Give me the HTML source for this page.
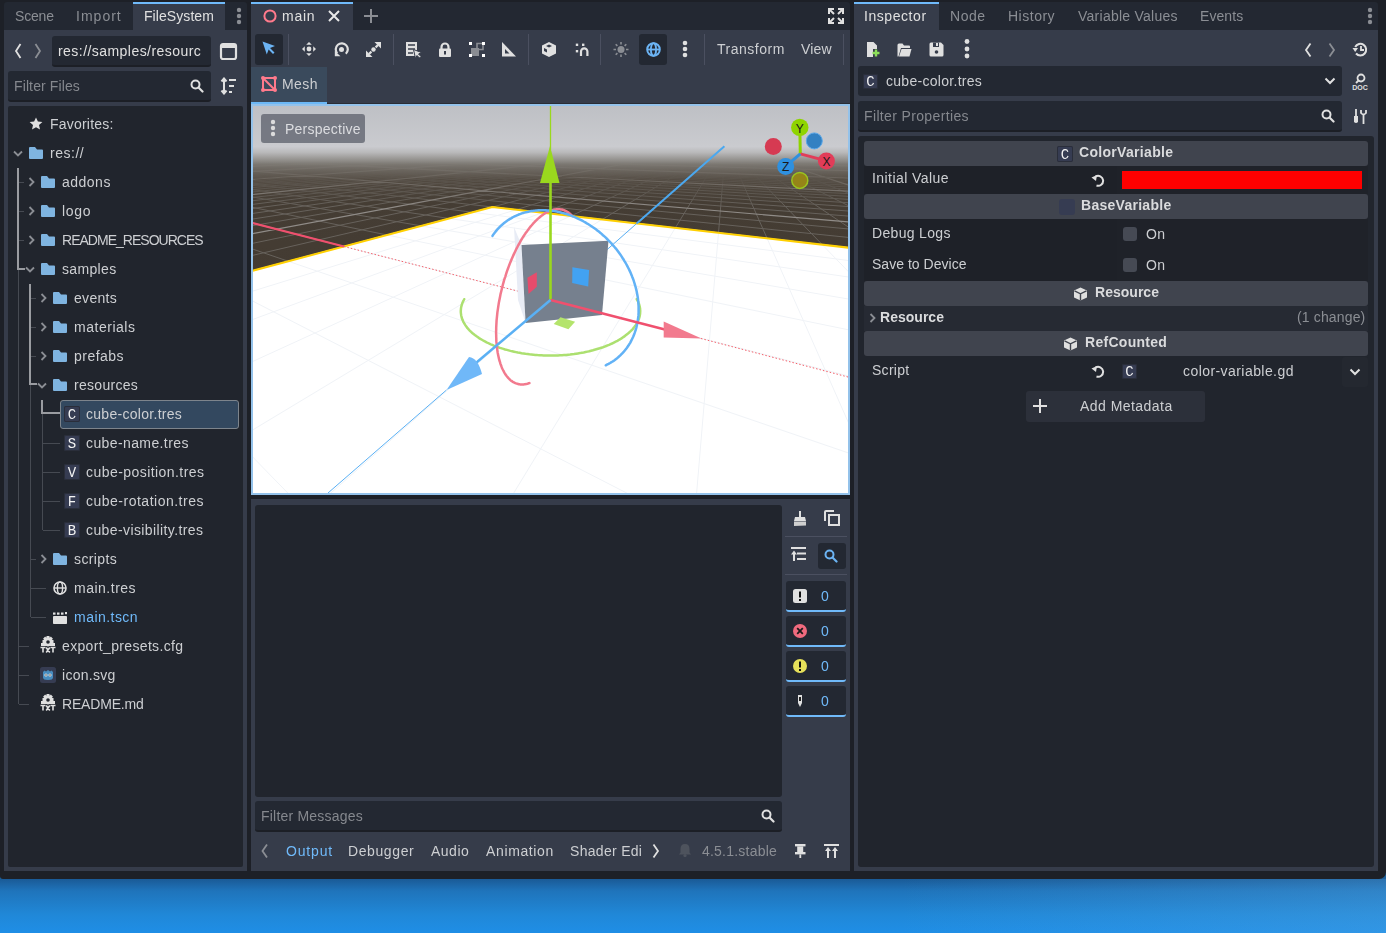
<!DOCTYPE html><html><head><meta charset="utf-8"><style>
*{margin:0;padding:0;box-sizing:border-box}
html,body{width:1386px;height:933px;overflow:hidden}
body{position:relative;font-family:"Liberation Sans",sans-serif;font-size:14px;color:#cdcfd2;
background:linear-gradient(180deg,#1b5a93 0px,#1b5a93 870px,#2d8bd6 933px)}
.a{position:absolute}
.t{position:absolute;line-height:16px;white-space:nowrap;will-change:transform}
</style></head><body>
<div class=a style="left:0;top:879px;width:1386px;height:54px;background:linear-gradient(180deg,#1a5a96 0px,#1f74bb 12px,#2088d8 36px,#1f8ee6 54px)"></div>
<div class=a style="left:900px;top:879px;width:486px;height:54px;background:linear-gradient(90deg,rgba(60,160,230,0),rgba(90,170,230,.30))"></div>
<div class=a style="left:0;top:0;width:1386px;height:879px;background:#1d2027;border-radius:0 0 7px 3px"></div>
<div class=a style="left:4px;top:2px;width:243px;height:28px;background:#232832;border-radius:3px 3px 0 0"></div>
<div class=a style="left:133px;top:2px;width:92px;height:28px;background:#363c4a;"></div>
<div class=a style="left:133px;top:2px;width:92px;height:2px;background:#70bafa;"></div>
<div class=t style="left:15px;top:8px;color:#8b8e94;font-size:14px;font-weight:normal;letter-spacing:-0.169px">Scene</div>
<div class=t style="left:76px;top:8px;color:#8b8e94;font-size:14px;font-weight:normal;letter-spacing:1.013px">Import</div>
<div class=t style="left:144px;top:8px;color:#e0e0e0;font-size:14px;font-weight:normal;letter-spacing:0.073px">FileSystem</div>
<svg class=a style="left:235px;top:6px;" width="8" height="20" viewBox="0 0 8 20"><circle cx="4" cy="4" r="2.2" fill="#8b8e94"/><circle cx="4" cy="10" r="2.2" fill="#8b8e94"/><circle cx="4" cy="16" r="2.2" fill="#8b8e94"/></svg>
<div class=a style="left:4px;top:30px;width:243px;height:841px;background:#363c4a;"></div>
<svg class=a style="left:13px;top:42px;" width="10" height="18" viewBox="0 0 10 18"><path d="M7.5 2 L3 9 L7.5 16" stroke="#e0e0e0" stroke-width="1.8" fill="none"/></svg>
<svg class=a style="left:33px;top:42px;" width="10" height="18" viewBox="0 0 10 18"><path d="M2.5 2 L7 9 L2.5 16" stroke="#8b8e94" stroke-width="1.8" fill="none"/></svg>
<div class=a style="left:52px;top:36px;width:159px;height:31px;background:#232832;border-radius:3px;border-bottom:2px solid #1c1f26"></div>
<div class=a style="left:58px;top:36px;width:143px;height:31px;overflow:hidden"><div class=t style="left:0px;top:7px;color:#e0e0e0;letter-spacing:0.45px">res://samples/resources</div></div>
<svg class=a style="left:219px;top:42px;" width="19" height="19" viewBox="0 0 19 19"><rect x="2" y="2" width="15" height="15" rx="2" stroke="#e0e0e0" stroke-width="2.2" fill="none"/><rect x="2" y="2" width="15" height="4" fill="#e0e0e0"/></svg>
<div class=a style="left:8px;top:71px;width:203px;height:31px;background:#232832;border-radius:3px;border-bottom:2px solid #1c1f26"></div>
<div class=t style="left:14px;top:78px;color:#85888e;font-size:14px;font-weight:normal;letter-spacing:0.117px">Filter Files</div>
<svg class=a style="left:190px;top:79px;" width="14" height="14" viewBox="0 0 14 14"><circle cx="5.5" cy="5.5" r="4" stroke="#e0e0e0" stroke-width="2" fill="none"/><path d="M8.5 8.5 L12.5 12.5" stroke="#e0e0e0" stroke-width="2.2" stroke-linecap="round"/></svg>
<svg class=a style="left:220px;top:77px;" width="18" height="18" viewBox="0 0 18 18"><path d="M4 2 L4 16 M1.5 4.5 L4 1.5 L6.5 4.5 M1.5 13.5 L4 16.5 L6.5 13.5" stroke="#e0e0e0" stroke-width="2" fill="none"/><path d="M9 3h7 M9 9h5 M9 15h3" stroke="#e0e0e0" stroke-width="2"/></svg>
<div class=a style="left:8px;top:106px;width:235px;height:761px;background:#21252d;border-radius:2px"></div>
<div class=a style="left:17px;top:168px;width:2px;height:102px;background:#9a9ca1;"></div>
<div class=a style="left:17px;top:268px;width:8px;height:2px;background:#9a9ca1;"></div>
<div class=a style="left:18px;top:270px;width:1px;height:434px;background:#464a52;"></div>
<div class=a style="left:19px;top:182px;width:5px;height:1px;background:#464a52;"></div>
<div class=a style="left:19px;top:211px;width:5px;height:1px;background:#464a52;"></div>
<div class=a style="left:19px;top:240px;width:5px;height:1px;background:#464a52;"></div>
<div class=a style="left:19px;top:646px;width:10px;height:1px;background:#464a52;"></div>
<div class=a style="left:19px;top:675px;width:10px;height:1px;background:#464a52;"></div>
<div class=a style="left:19px;top:704px;width:10px;height:1px;background:#464a52;"></div>
<div class=a style="left:29px;top:284px;width:2px;height:101px;background:#9a9ca1;"></div>
<div class=a style="left:29px;top:383px;width:8px;height:2px;background:#9a9ca1;"></div>
<div class=a style="left:30px;top:385px;width:1px;height:232px;background:#464a52;"></div>
<div class=a style="left:31px;top:298px;width:5px;height:1px;background:#464a52;"></div>
<div class=a style="left:31px;top:327px;width:5px;height:1px;background:#464a52;"></div>
<div class=a style="left:31px;top:356px;width:5px;height:1px;background:#464a52;"></div>
<div class=a style="left:31px;top:559px;width:5px;height:1px;background:#464a52;"></div>
<div class=a style="left:31px;top:588px;width:15px;height:1px;background:#464a52;"></div>
<div class=a style="left:31px;top:617px;width:15px;height:1px;background:#464a52;"></div>
<div class=a style="left:41px;top:400px;width:2px;height:14px;background:#9a9ca1;"></div>
<div class=a style="left:41px;top:412px;width:19px;height:2px;background:#9a9ca1;"></div>
<div class=a style="left:42px;top:414px;width:1px;height:116px;background:#464a52;"></div>
<div class=a style="left:43px;top:443px;width:17px;height:1px;background:#464a52;"></div>
<div class=a style="left:43px;top:472px;width:17px;height:1px;background:#464a52;"></div>
<div class=a style="left:43px;top:501px;width:17px;height:1px;background:#464a52;"></div>
<div class=a style="left:43px;top:530px;width:17px;height:1px;background:#464a52;"></div>
<div class=a style="left:60px;top:400px;width:179px;height:29px;background:#33485f;border:1px solid #7d848c;border-radius:3px"></div>
<svg class=a style="left:29px;top:117px;" width="14" height="14" viewBox="0 0 14 14"><path d="M7 0.5 L8.9 4.6 L13.4 5 L10 8 L11 12.6 L7 10.2 L3 12.6 L4 8 L0.6 5 L5.1 4.6 Z" fill="#e0e0e0"/></svg>
<div class=t style="left:50px;top:116px;color:#cdcfd2;font-size:14px;font-weight:normal;letter-spacing:0.205px">Favorites:</div>
<svg class=a style="left:29px;top:147px;" width="14" height="12" viewBox="0 0 14 12"><path d="M0 1 Q0 0 1 0 H6 L8 2.5 H13 Q14 2.5 14 3.5 V11 Q14 12 13 12 H1 Q0 12 0 11 Z" fill="#7fb4e0"/></svg>
<svg class=a style="left:13px;top:150px;" width="10" height="7" viewBox="0 0 10 7"><path d="M1 1.5 L5 5.5 L9 1.5" stroke="#8b8e94" stroke-width="1.8" fill="none"/></svg>
<div class=t style="left:50px;top:145px;color:#cdcfd2;font-size:14px;font-weight:normal;letter-spacing:0.526px">res://</div>
<svg class=a style="left:41px;top:176px;" width="14" height="12" viewBox="0 0 14 12"><path d="M0 1 Q0 0 1 0 H6 L8 2.5 H13 Q14 2.5 14 3.5 V11 Q14 12 13 12 H1 Q0 12 0 11 Z" fill="#7fb4e0"/></svg>
<svg class=a style="left:28px;top:177px;" width="7" height="10" viewBox="0 0 7 10"><path d="M1.5 1 L5.5 5 L1.5 9" stroke="#8b8e94" stroke-width="1.8" fill="none"/></svg>
<div class=t style="left:62px;top:174px;color:#cdcfd2;font-size:14px;font-weight:normal;letter-spacing:0.495px">addons</div>
<svg class=a style="left:41px;top:205px;" width="14" height="12" viewBox="0 0 14 12"><path d="M0 1 Q0 0 1 0 H6 L8 2.5 H13 Q14 2.5 14 3.5 V11 Q14 12 13 12 H1 Q0 12 0 11 Z" fill="#7fb4e0"/></svg>
<svg class=a style="left:28px;top:206px;" width="7" height="10" viewBox="0 0 7 10"><path d="M1.5 1 L5.5 5 L1.5 9" stroke="#8b8e94" stroke-width="1.8" fill="none"/></svg>
<div class=t style="left:62px;top:203px;color:#cdcfd2;font-size:14px;font-weight:normal;letter-spacing:0.676px">logo</div>
<svg class=a style="left:41px;top:234px;" width="14" height="12" viewBox="0 0 14 12"><path d="M0 1 Q0 0 1 0 H6 L8 2.5 H13 Q14 2.5 14 3.5 V11 Q14 12 13 12 H1 Q0 12 0 11 Z" fill="#7fb4e0"/></svg>
<svg class=a style="left:28px;top:235px;" width="7" height="10" viewBox="0 0 7 10"><path d="M1.5 1 L5.5 5 L1.5 9" stroke="#8b8e94" stroke-width="1.8" fill="none"/></svg>
<div class=t style="left:62px;top:232px;color:#cdcfd2;font-size:14px;font-weight:normal;letter-spacing:-0.978px">README_RESOURCES</div>
<svg class=a style="left:41px;top:263px;" width="14" height="12" viewBox="0 0 14 12"><path d="M0 1 Q0 0 1 0 H6 L8 2.5 H13 Q14 2.5 14 3.5 V11 Q14 12 13 12 H1 Q0 12 0 11 Z" fill="#7fb4e0"/></svg>
<svg class=a style="left:25px;top:266px;" width="10" height="7" viewBox="0 0 10 7"><path d="M1 1.5 L5 5.5 L9 1.5" stroke="#8b8e94" stroke-width="1.8" fill="none"/></svg>
<div class=t style="left:62px;top:261px;color:#cdcfd2;font-size:14px;font-weight:normal;letter-spacing:0.335px">samples</div>
<svg class=a style="left:53px;top:292px;" width="14" height="12" viewBox="0 0 14 12"><path d="M0 1 Q0 0 1 0 H6 L8 2.5 H13 Q14 2.5 14 3.5 V11 Q14 12 13 12 H1 Q0 12 0 11 Z" fill="#7fb4e0"/></svg>
<svg class=a style="left:40px;top:293px;" width="7" height="10" viewBox="0 0 7 10"><path d="M1.5 1 L5.5 5 L1.5 9" stroke="#8b8e94" stroke-width="1.8" fill="none"/></svg>
<div class=t style="left:74px;top:290px;color:#cdcfd2;font-size:14px;font-weight:normal;letter-spacing:0.299px">events</div>
<svg class=a style="left:53px;top:321px;" width="14" height="12" viewBox="0 0 14 12"><path d="M0 1 Q0 0 1 0 H6 L8 2.5 H13 Q14 2.5 14 3.5 V11 Q14 12 13 12 H1 Q0 12 0 11 Z" fill="#7fb4e0"/></svg>
<svg class=a style="left:40px;top:322px;" width="7" height="10" viewBox="0 0 7 10"><path d="M1.5 1 L5.5 5 L1.5 9" stroke="#8b8e94" stroke-width="1.8" fill="none"/></svg>
<div class=t style="left:74px;top:319px;color:#cdcfd2;font-size:14px;font-weight:normal;letter-spacing:0.519px">materials</div>
<svg class=a style="left:53px;top:350px;" width="14" height="12" viewBox="0 0 14 12"><path d="M0 1 Q0 0 1 0 H6 L8 2.5 H13 Q14 2.5 14 3.5 V11 Q14 12 13 12 H1 Q0 12 0 11 Z" fill="#7fb4e0"/></svg>
<svg class=a style="left:40px;top:351px;" width="7" height="10" viewBox="0 0 7 10"><path d="M1.5 1 L5.5 5 L1.5 9" stroke="#8b8e94" stroke-width="1.8" fill="none"/></svg>
<div class=t style="left:74px;top:348px;color:#cdcfd2;font-size:14px;font-weight:normal;letter-spacing:0.471px">prefabs</div>
<svg class=a style="left:53px;top:379px;" width="14" height="12" viewBox="0 0 14 12"><path d="M0 1 Q0 0 1 0 H6 L8 2.5 H13 Q14 2.5 14 3.5 V11 Q14 12 13 12 H1 Q0 12 0 11 Z" fill="#7fb4e0"/></svg>
<svg class=a style="left:37px;top:382px;" width="10" height="7" viewBox="0 0 10 7"><path d="M1 1.5 L5 5.5 L9 1.5" stroke="#8b8e94" stroke-width="1.8" fill="none"/></svg>
<div class=t style="left:74px;top:377px;color:#cdcfd2;font-size:14px;font-weight:normal;letter-spacing:0.288px">resources</div>
<div class=a style="left:64px;top:406px;width:16px;height:16px;background:#363c52;border-radius:2px;box-shadow:inset 0 0 0 1px #2a2e3a;color:#f4f4f4;font:14px 'Liberation Mono',monospace;line-height:18px;text-align:center;will-change:transform">C</div>
<div class=t style="left:86px;top:406px;color:#cdcfd2;font-size:14px;font-weight:normal;letter-spacing:0.286px">cube-color.tres</div>
<div class=a style="left:64px;top:435px;width:16px;height:16px;background:#363c52;border-radius:2px;box-shadow:inset 0 0 0 1px #2a2e3a;color:#f4f4f4;font:14px 'Liberation Mono',monospace;line-height:18px;text-align:center;will-change:transform">S</div>
<div class=t style="left:86px;top:435px;color:#cdcfd2;font-size:14px;font-weight:normal;letter-spacing:0.394px">cube-name.tres</div>
<div class=a style="left:64px;top:464px;width:16px;height:16px;background:#363c52;border-radius:2px;box-shadow:inset 0 0 0 1px #2a2e3a;color:#f4f4f4;font:14px 'Liberation Mono',monospace;line-height:18px;text-align:center;will-change:transform">V</div>
<div class=t style="left:86px;top:464px;color:#cdcfd2;font-size:14px;font-weight:normal;letter-spacing:0.443px">cube-position.tres</div>
<div class=a style="left:64px;top:493px;width:16px;height:16px;background:#363c52;border-radius:2px;box-shadow:inset 0 0 0 1px #2a2e3a;color:#f4f4f4;font:14px 'Liberation Mono',monospace;line-height:18px;text-align:center;will-change:transform">F</div>
<div class=t style="left:86px;top:493px;color:#cdcfd2;font-size:14px;font-weight:normal;letter-spacing:0.501px">cube-rotation.tres</div>
<div class=a style="left:64px;top:522px;width:16px;height:16px;background:#363c52;border-radius:2px;box-shadow:inset 0 0 0 1px #2a2e3a;color:#f4f4f4;font:14px 'Liberation Mono',monospace;line-height:18px;text-align:center;will-change:transform">B</div>
<div class=t style="left:86px;top:522px;color:#cdcfd2;font-size:14px;font-weight:normal;letter-spacing:0.399px">cube-visibility.tres</div>
<svg class=a style="left:53px;top:553px;" width="14" height="12" viewBox="0 0 14 12"><path d="M0 1 Q0 0 1 0 H6 L8 2.5 H13 Q14 2.5 14 3.5 V11 Q14 12 13 12 H1 Q0 12 0 11 Z" fill="#7fb4e0"/></svg>
<svg class=a style="left:40px;top:554px;" width="7" height="10" viewBox="0 0 7 10"><path d="M1.5 1 L5.5 5 L1.5 9" stroke="#8b8e94" stroke-width="1.8" fill="none"/></svg>
<div class=t style="left:74px;top:551px;color:#cdcfd2;font-size:14px;font-weight:normal;letter-spacing:0.393px">scripts</div>
<svg class=a style="left:53px;top:581px;" width="14" height="14" viewBox="0 0 14 14"><circle cx="7" cy="7" r="6" stroke="#e0e0e0" stroke-width="1.6" fill="none"/><ellipse cx="7" cy="7" rx="2.6" ry="6" stroke="#e0e0e0" stroke-width="1.4" fill="none"/><path d="M1 7 H13" stroke="#e0e0e0" stroke-width="1.4"/></svg>
<div class=t style="left:74px;top:580px;color:#cdcfd2;font-size:14px;font-weight:normal;letter-spacing:0.505px">main.tres</div>
<svg class=a style="left:52px;top:611px;" width="16" height="14" viewBox="0 0 16 14"><rect x="1" y="5" width="14" height="8" rx=".8" fill="#e0e0e0"/><rect x="1" y="1.5" width="2.5" height="2.2" fill="#e0e0e0"/><rect x="5" y="1.5" width="2.5" height="2.2" fill="#e0e0e0"/><rect x="9" y="1.5" width="2.5" height="2.2" fill="#e0e0e0"/><rect x="13" y="1" width="2" height="2.2" fill="#e0e0e0"/></svg>
<div class=t style="left:74px;top:609px;color:#70bafa;font-size:14px;font-weight:normal;letter-spacing:0.464px">main.tscn</div>
<svg class=a style="left:40px;top:636px;" width="16" height="17" viewBox="0 0 16 17"><circle cx="8" cy="5.8" r="4.6" fill="#e0e0e0"/><rect x="6.5" y="0" width="3" height="3" transform="rotate(0 8 5.5)" fill="#e0e0e0"/><rect x="6.5" y="0" width="3" height="3" transform="rotate(45 8 5.5)" fill="#e0e0e0"/><rect x="6.5" y="0" width="3" height="3" transform="rotate(90 8 5.5)" fill="#e0e0e0"/><rect x="6.5" y="0" width="3" height="3" transform="rotate(270 8 5.5)" fill="#e0e0e0"/><rect x="6.5" y="0" width="3" height="3" transform="rotate(315 8 5.5)" fill="#e0e0e0"/><rect x="1" y="7" width="14" height="3" fill="#e0e0e0"/><circle cx="8" cy="6" r="1.8" fill="#21252d"/><path d="M0.5 11.5 H5.5 M3 11.5 V16.5 M10.5 11.5 H15.5 M13 11.5 V16.5 M6.2 11.5 L9.8 16.5 M9.8 11.5 L6.2 16.5" stroke="#e0e0e0" stroke-width="1.6"/></svg>
<div class=t style="left:62px;top:638px;color:#cdcfd2;font-size:14px;font-weight:normal;letter-spacing:0.347px">export_presets.cfg</div>
<svg class=a style="left:40px;top:667px;" width="16" height="16" viewBox="0 0 16 16"><rect x="0" y="0" width="16" height="16" rx="2.5" fill="#363c52"/><path d="M3 5 L4.5 3.5 L6 4.5 L8 3 L10 4.5 L11.5 3.5 L13 5 V10.5 Q13 13 8 13 Q3 13 3 10.5 Z" fill="#478cbf"/><circle cx="6" cy="8" r="1.6" fill="#e8e8e8"/><circle cx="10" cy="8" r="1.6" fill="#e8e8e8"/><circle cx="6" cy="8" r=".7" fill="#333"/><circle cx="10" cy="8" r=".7" fill="#333"/></svg>
<div class=t style="left:62px;top:667px;color:#cdcfd2;font-size:14px;font-weight:normal;letter-spacing:0.285px">icon.svg</div>
<svg class=a style="left:40px;top:694px;" width="16" height="17" viewBox="0 0 16 17"><circle cx="8" cy="5.8" r="4.6" fill="#e0e0e0"/><rect x="6.5" y="0" width="3" height="3" transform="rotate(0 8 5.5)" fill="#e0e0e0"/><rect x="6.5" y="0" width="3" height="3" transform="rotate(45 8 5.5)" fill="#e0e0e0"/><rect x="6.5" y="0" width="3" height="3" transform="rotate(90 8 5.5)" fill="#e0e0e0"/><rect x="6.5" y="0" width="3" height="3" transform="rotate(270 8 5.5)" fill="#e0e0e0"/><rect x="6.5" y="0" width="3" height="3" transform="rotate(315 8 5.5)" fill="#e0e0e0"/><rect x="1" y="7" width="14" height="3" fill="#e0e0e0"/><circle cx="8" cy="6" r="1.8" fill="#21252d"/><path d="M0.5 11.5 H5.5 M3 11.5 V16.5 M10.5 11.5 H15.5 M13 11.5 V16.5 M6.2 11.5 L9.8 16.5 M9.8 11.5 L6.2 16.5" stroke="#e0e0e0" stroke-width="1.6"/></svg>
<div class=t style="left:62px;top:696px;color:#cdcfd2;font-size:14px;font-weight:normal;letter-spacing:-0.182px">README.md</div>
<div class=a style="left:251px;top:2px;width:599px;height:28px;background:#232832;border-radius:3px 3px 0 0"></div>
<div class=a style="left:251px;top:2px;width:102px;height:28px;background:#363c4a;"></div>
<div class=a style="left:251px;top:2px;width:102px;height:2px;background:#70bafa;"></div>
<svg class=a style="left:262px;top:8px;" width="16" height="16" viewBox="0 0 16 16"><circle cx="8" cy="8" r="5.6" stroke="#ff7a8c" stroke-width="2" fill="none"/></svg>
<div class=t style="left:282px;top:8px;color:#e0e0e0;font-size:14px;font-weight:normal;letter-spacing:0.715px">main</div>
<svg class=a style="left:327px;top:10px;" width="14" height="12" viewBox="0 0 14 12"><path d="M2 1 L12 11 M12 1 L2 11" stroke="#e8e8e8" stroke-width="2"/></svg>
<svg class=a style="left:363px;top:9px;" width="16" height="14" viewBox="0 0 16 14"><path d="M8 0 V14 M1 7 H15" stroke="#8b8e94" stroke-width="2"/></svg>
<svg class=a style="left:828px;top:8px;" width="16" height="16" viewBox="0 0 16 16"><path d="M1 6 V1 H6 M10 1 H15 V6 M15 10 V15 H10 M6 15 H1 V10" stroke="#e0e0e0" stroke-width="2" fill="none"/><path d="M2 2 L6 6 M14 2 L10 6 M14 14 L10 10 M2 14 L6 10" stroke="#e0e0e0" stroke-width="2"/></svg>
<div class=a style="left:251px;top:30px;width:599px;height:73px;background:#363c4a;"></div>
<div class=a style="left:255px;top:34px;width:28px;height:31px;background:#232832;border-radius:3px"></div>
<svg class=a style="left:262px;top:41px;" width="14" height="14" viewBox="0 0 14 14"><path d="M0.5 0.5 L13 5 L8 7 L12.5 11.5 L11 13 L6.6 8.5 L4.8 13.5 Z" fill="#6cb4f4"/></svg>
<div class=a style="left:288px;top:34px;width:1px;height:31px;background:#4b5060;"></div>
<svg class=a style="left:302px;top:42px;" width="14" height="14" viewBox="0 0 14 14"><circle cx="7" cy="7" r="2.4" fill="#e0e0e0"/><path d="M7 0 L9.8 2.8 H4.2 Z M7 14 L9.8 11.2 H4.2 Z M0 7 L2.8 4.2 V9.8 Z M14 7 L11.2 4.2 V9.8 Z" fill="#e0e0e0"/></svg>
<svg class=a style="left:334px;top:42px;" width="15" height="15" viewBox="0 0 15 15"><path d="M3.2 11.2 A6 6 0 1 1 11.8 11.8" stroke="#e0e0e0" stroke-width="2.2" fill="none"/><circle cx="7.5" cy="7.5" r="2.5" fill="#e0e0e0"/><path d="M0.8 9 L6.5 14.2 H0.8 Z" fill="#e0e0e0"/></svg>
<svg class=a style="left:366px;top:42px;" width="15" height="15" viewBox="0 0 15 15"><path d="M8.5 0 H15 V6.5 Z M6.5 15 H0 V8.5 Z" fill="#e0e0e0"/><path d="M12 3 L9.6 5.4 M3 12 L5.4 9.6" stroke="#e0e0e0" stroke-width="2.2"/><circle cx="7.5" cy="7.5" r="2.2" fill="#e0e0e0"/></svg>
<div class=a style="left:393px;top:34px;width:1px;height:31px;background:#4b5060;"></div>
<svg class=a style="left:405px;top:42px;" width="17" height="16" viewBox="0 0 17 16"><rect x="1" y="0" width="11" height="14" fill="#e0e0e0"/><path d="M3 3 H10 M3 7 H10 M3 11 H8" stroke="#363c4a" stroke-width="1.6"/><path d="M8.5 7.5 L16.5 10.5 L13.5 12 L16 14.5 L14.5 16 L12 13.5 L10.5 16.5 Z" fill="#e0e0e0" stroke="#363c4a" stroke-width="1"/></svg>
<svg class=a style="left:438px;top:42px;" width="14" height="15" viewBox="0 0 14 15"><path d="M3.5 7 V5 A3.5 3.5 0 0 1 10.5 5 V7" stroke="#e0e0e0" stroke-width="2.2" fill="none"/><rect x="1" y="6.5" width="12" height="8.5" rx="1" fill="#e0e0e0"/><rect x="6" y="9" width="2" height="3.5" fill="#363c4a"/></svg>
<svg class=a style="left:469px;top:42px;" width="16" height="15" viewBox="0 0 16 15"><rect x="2" y="6" width="8" height="8" fill="#8a8d93"/><path d="M8 6 V1.5 H14 V7.5 H10" stroke="#8a8d93" stroke-width="1.6" fill="none"/><rect x="0" y="0" width="3" height="3" fill="#fff"/><rect x="13" y="0" width="3" height="3" fill="#fff"/><rect x="0" y="12" width="3" height="3" fill="#fff"/><rect x="13" y="12" width="3" height="3" fill="#fff"/></svg>
<svg class=a style="left:501px;top:42px;" width="15" height="15" viewBox="0 0 15 15"><path d="M1 0 V14.5 H15 Z" fill="#e0e0e0"/><path d="M4 7 V11.5 H8.5 Z" fill="#363c4a"/></svg>
<div class=a style="left:528px;top:34px;width:1px;height:31px;background:#4b5060;"></div>
<svg class=a style="left:541px;top:42px;" width="16" height="15" viewBox="0 0 16 15"><path d="M8 0 L15 3.5 V11.5 L8 15 L1 11.5 V3.5 Z" fill="#e0e0e0"/><path d="M8 2.5 L11 4 L8 5.5 L5 4 Z" fill="#363c4a"/><path d="M3 6 L6 7.5 V10.5 L3 9 Z" fill="#363c4a"/></svg>
<svg class=a style="left:575px;top:42px;" width="15" height="15" viewBox="0 0 15 15"><path d="M6 14 V9.5 A3.2 3.2 0 0 1 12.4 9.5 V14" stroke="#e0e0e0" stroke-width="2.2" fill="none"/><rect x="0.8" y="1.6" width="2.4" height="2.4" fill="#e0e0e0"/><rect x="7" y="1.6" width="2.4" height="2.4" fill="#e0e0e0"/><rect x="0.8" y="8" width="2.4" height="2.4" fill="#e0e0e0"/></svg>
<div class=a style="left:600px;top:34px;width:1px;height:31px;background:#4b5060;"></div>
<svg class=a style="left:613px;top:42px;" width="16" height="15" viewBox="0 0 16 15"><circle cx="8" cy="7.5" r="3.5" fill="#8b8e94"/><path d="M8 0 V2.5 M8 12.5 V15 M0.5 7.5 H3 M13 7.5 H15.5 M2.7 2.2 L4.4 3.9 M11.6 11.1 L13.3 12.8 M13.3 2.2 L11.6 3.9 M4.4 11.1 L2.7 12.8" stroke="#8b8e94" stroke-width="1.6"/></svg>
<div class=a style="left:639px;top:34px;width:28px;height:31px;background:#232832;border-radius:3px"></div>
<svg class=a style="left:646px;top:42px;" width="15" height="15" viewBox="0 0 15 15"><circle cx="7.5" cy="7.5" r="6.3" stroke="#6cb4f4" stroke-width="2" fill="none"/><ellipse cx="7.5" cy="7.5" rx="2.6" ry="6.3" stroke="#6cb4f4" stroke-width="1.8" fill="none"/><path d="M1 7.5 H14" stroke="#6cb4f4" stroke-width="1.8"/></svg>
<svg class=a style="left:681px;top:38px;" width="8" height="22" viewBox="0 0 8 22"><circle cx="4" cy="5" r="2.3" fill="#e0e0e0"/><circle cx="4" cy="11" r="2.3" fill="#e0e0e0"/><circle cx="4" cy="17" r="2.3" fill="#e0e0e0"/></svg>
<div class=a style="left:704px;top:34px;width:1px;height:31px;background:#4b5060;"></div>
<div class=t style="left:717px;top:41px;color:#cdcfd2;font-size:14px;font-weight:normal;letter-spacing:0.521px">Transform</div>
<div class=t style="left:801px;top:41px;color:#cdcfd2;font-size:14px;font-weight:normal;letter-spacing:0.137px">View</div>
<div class=a style="left:843px;top:34px;width:1px;height:31px;background:#4b5060;"></div>
<div class=a style="left:251px;top:67px;width:76px;height:35px;background:#3a4a5c;"></div>
<div class=a style="left:251px;top:102px;width:76px;height:2px;background:#6cb8f6;"></div>
<div class=a style="left:327px;top:103px;width:523px;height:1px;background:#2a2d35;"></div>
<svg class=a style="left:261px;top:76px;" width="16" height="16" viewBox="0 0 16 16"><rect x="2" y="2" width="12" height="12" stroke="#ff7a8c" stroke-width="2" fill="none"/><path d="M2 2 L14 14" stroke="#ff7a8c" stroke-width="2"/><circle cx="2" cy="2" r="2" fill="#ff7a8c"/><circle cx="14" cy="2" r="2" fill="#ff7a8c"/><circle cx="2" cy="14" r="2" fill="#ff7a8c"/><circle cx="14" cy="14" r="2" fill="#ff7a8c"/></svg>
<div class=t style="left:282px;top:76px;color:#cdcfd2;font-size:14px;font-weight:normal;letter-spacing:0.430px">Mesh</div>
<div class=a style="left:251px;top:104px;width:599px;height:391px;background:#94c2ea;"></div>
<svg class=a style="left:253px;top:106px" width="595" height="387" viewBox="253 106 595 387">
<defs>
<linearGradient id="sky" x1="0" y1="106" x2="0" y2="493" gradientUnits="userSpaceOnUse">
<stop offset="0" stop-color="#bec0c5"/><stop offset="0.105" stop-color="#cacbcf"/><stop offset="0.12" stop-color="#b9b9ba"/>
<stop offset="0.15" stop-color="#7e7a74"/><stop offset="0.19" stop-color="#524a41"/><stop offset="0.25" stop-color="#453d34"/><stop offset="1" stop-color="#3e362d"/>
</linearGradient>
<linearGradient id="gfade" x1="0" y1="106" x2="0" y2="493" gradientUnits="userSpaceOnUse">
<stop offset="0" stop-color="#000"/><stop offset="0.145" stop-color="#000"/><stop offset="0.26" stop-color="#fff"/><stop offset="1" stop-color="#fff"/>
</linearGradient>
<mask id="gm"><rect x="253" y="106" width="595" height="387" fill="url(#gfade)"/></mask>
</defs>
<rect x="253" y="106" width="595" height="387" fill="url(#sky)"/>
<g mask="url(#gm)">
<path d="M457.5 149.2L-196026.2 3235.6M454.6 149.2L1558.3 158.4M458.9 149.2L-194402.3 3235.6M453.2 149.2L1572.6 158.6M460.4 149.2L-192778.4 3235.6M451.7 149.2L1587.3 158.9M461.9 149.2L-191154.5 3235.6M450.2 149.3L1602.6 159.1M463.3 149.2L-189530.6 3235.6M448.7 149.3L1618.4 159.4M464.8 149.2L-187906.7 3235.6M447.2 149.3L1634.8 159.6M466.3 149.3L-186282.8 3235.6M445.7 149.3L1651.8 159.9M469.4 149.3L-183035.0 3235.6M442.6 149.4L1687.9 160.5M470.9 149.3L-181411.1 3235.6M441.0 149.4L1707.0 160.8M472.4 149.3L-179787.2 3235.6M439.4 149.4L1726.8 161.1M473.9 149.3L-178163.3 3235.6M437.8 149.5L1747.5 161.5M475.5 149.3L-176539.3 3235.6M436.2 149.5L1769.1 161.8M477.1 149.3L-174915.4 3235.6M434.6 149.5L1791.5 162.2M478.6 149.4L-173291.5 3235.6M432.9 149.5L1815.0 162.6M481.8 149.4L-170043.7 3235.6M429.5 149.6L1865.2 163.4M483.4 149.4L-168419.8 3235.6M427.8 149.6L1892.1 163.8M485.0 149.4L-166795.9 3235.6M426.0 149.6L1920.3 164.3M486.6 149.4L-165172.0 3235.6M424.3 149.7L1949.8 164.7M488.2 149.4L-163548.1 3235.6M422.5 149.7L1980.9 165.2M489.9 149.5L-161924.2 3235.6M420.7 149.7L2013.6 165.8M491.5 149.5L-160300.3 3235.6M418.9 149.8L2048.0 166.3M494.8 149.5L-157052.5 3235.6M415.1 149.8L2122.7 167.5M496.5 149.5L-155428.6 3235.6M413.2 149.8L2163.4 168.2M498.2 149.5L-153804.7 3235.6M411.3 149.9L2206.4 168.9M499.9 149.5L-152180.8 3235.6M409.4 149.9L2252.1 169.6M501.6 149.6L-150556.9 3235.6M407.4 149.9L2300.7 170.4M503.3 149.6L-148933.0 3235.6M405.4 150.0L2352.5 171.2M505.1 149.6L-147309.1 3235.6M403.4 150.0L2407.9 172.1M508.5 149.6L-144061.3 3235.6M399.3 150.1L2530.7 174.1M510.3 149.6L-142437.4 3235.6M397.2 150.1L2599.0 175.2M512.1 149.6L-140813.5 3235.6M395.1 150.1L2672.8 176.4M513.9 149.7L-139189.6 3235.6M392.9 150.2L2752.6 177.7M515.7 149.7L-137565.6 3235.6M390.7 150.2L2839.2 179.1M517.5 149.7L-135941.7 3235.6M388.5 150.2L2933.6 180.6M519.3 149.7L-134317.8 3235.6M386.3 150.3L3036.8 182.3M523.0 149.7L-131070.0 3235.6M381.7 150.3L3275.1 186.1M524.8 149.7L-129446.1 3235.6M379.4 150.4L3413.7 188.4M526.7 149.8L-127822.2 3235.6M377.1 150.4L3568.2 190.9M528.6 149.8L-126198.3 3235.6M374.7 150.4L3741.6 193.7M530.4 149.8L-124574.4 3235.6M372.3 150.5L3937.5 196.8M532.3 149.8L-122950.5 3235.6M369.8 150.5L4160.6 200.4M534.3 149.8L-121326.6 3235.6M367.3 150.6L4417.0 204.6M538.1 149.9L-118078.8 3235.6M362.2 150.6L5064.9 215.0M540.1 149.9L-116454.9 3235.6M359.6 150.7L5482.3 221.8M542.0 149.9L-114831.0 3235.6M357.0 150.7L5988.6 230.0M544.0 149.9L-113207.1 3235.6M354.3 150.8L6615.5 240.1M546.0 149.9L-111583.2 3235.6M351.6 150.8L7412.0 253.0M548.0 149.9L-109959.3 3235.6M348.8 150.8L8457.6 269.8M550.0 150.0L-108335.4 3235.6M346.0 150.9L9890.8 293.0M554.1 150.0L-105087.6 3235.6M340.3 151.0L15290.5 380.2M556.2 150.0L-103463.7 3235.6M337.4 151.0L21372.7 478.4M558.3 150.0L-101839.8 3235.6M334.4 151.1L36177.3 717.5M560.3 150.0L-100215.9 3235.6M331.4 151.1L126013.0 2168.5M562.4 150.1L-98591.9 3235.6M328.4 151.2L189488.3 3235.6M564.6 150.1L-96968.0 3235.6M325.3 151.2L186479.9 3235.6M566.7 150.1L-95344.1 3235.6M322.1 151.3L183471.4 3235.6M571.0 150.1L-92096.3 3235.6M315.6 151.4L177454.4 3235.6M573.2 150.1L-90472.4 3235.6M312.3 151.4L174445.9 3235.6M575.4 150.2L-88848.5 3235.6M309.0 151.5L171437.4 3235.6M577.6 150.2L-87224.6 3235.6M305.6 151.5L168428.9 3235.6M579.8 150.2L-85600.7 3235.6M302.1 151.6L165420.4 3235.6M582.0 150.2L-83976.8 3235.6M298.5 151.6L162411.9 3235.6M584.3 150.2L-82352.9 3235.6M295.0 151.7L159403.4 3235.6M588.9 150.3L-79105.1 3235.6M287.6 151.8L153386.4 3235.6M591.2 150.3L-77481.2 3235.6M283.8 151.9L150377.9 3235.6M593.5 150.3L-75857.3 3235.6M280.0 151.9L147369.4 3235.6M595.8 150.3L-74233.4 3235.6M276.0 152.0L144360.9 3235.6M598.2 150.4L-72609.5 3235.6M272.1 152.0L141352.4 3235.6M600.5 150.4L-70985.6 3235.6M268.0 152.1L138343.9 3235.6M602.9 150.4L-69361.7 3235.6M263.9 152.2L135335.4 3235.6M607.8 150.4L-66113.9 3235.6M255.4 152.3L129318.4 3235.6M610.2 150.4L-64490.0 3235.6M251.0 152.4L126309.9 3235.6M612.7 150.5L-62866.1 3235.6M246.6 152.4L123301.4 3235.6M615.1 150.5L-61242.1 3235.6M242.1 152.5L120292.9 3235.6M617.6 150.5L-59618.2 3235.6M237.5 152.6L117284.4 3235.6M620.2 150.5L-57994.3 3235.6M232.8 152.7L114275.9 3235.6M622.7 150.6L-56370.4 3235.6M228.0 152.7L111267.4 3235.6M627.8 150.6L-53122.6 3235.6M218.1 152.9L105250.5 3235.6M630.4 150.6L-51498.7 3235.6M213.0 153.0L102242.0 3235.6M633.0 150.6L-49874.8 3235.6M207.8 153.0L99233.5 3235.6M635.7 150.7L-48250.9 3235.6M202.6 153.1L96225.0 3235.6M638.3 150.7L-46627.0 3235.6M197.2 153.2L93216.5 3235.6M641.0 150.7L-45003.1 3235.6M191.6 153.3L90208.0 3235.6M643.7 150.7L-43379.2 3235.6M186.0 153.4L87199.5 3235.6M649.1 150.8L-40131.4 3235.6M174.4 153.6L81182.5 3235.6M651.9 150.8L-38507.5 3235.6M168.4 153.7L78174.0 3235.6M654.7 150.8L-36883.6 3235.6M162.3 153.7L75165.5 3235.6M657.5 150.8L-35259.7 3235.6M156.0 153.8L72157.0 3235.6M660.3 150.9L-33635.8 3235.6M149.6 153.9L69148.5 3235.6M663.2 150.9L-32011.9 3235.6M143.0 154.0L66140.0 3235.6M666.0 150.9L-30388.0 3235.6M136.3 154.2L63131.5 3235.6M671.8 151.0L-27140.2 3235.6M122.5 154.4L57114.5 3235.6M674.8 151.0L-25516.3 3235.6M115.3 154.5L54106.0 3235.6M677.8 151.0L-23892.4 3235.6M107.9 154.6L51097.5 3235.6M680.7 151.0L-22268.4 3235.6M100.4 154.7L48089.0 3235.6M683.8 151.1L-20644.5 3235.6M92.6 154.8L45080.5 3235.6M686.8 151.1L-19020.6 3235.6M84.7 155.0L42072.0 3235.6M689.9 151.1L-17396.7 3235.6M76.6 155.1L39063.5 3235.6M696.1 151.2L-14148.9 3235.6M59.7 155.3L33046.5 3235.6M699.2 151.2L-12525.0 3235.6M50.9 155.5L30038.0 3235.6M702.4 151.2L492.4 207.0M-322.2 423.6L-10901.1 3235.6M41.9 155.6L492.4 207.0M885.4 251.9L27029.5 3235.6M705.6 151.2L516.2 209.7M-385.0 488.2L-9277.2 3235.6M32.7 155.8L472.7 212.3M910.1 268.4L24021.1 3235.6M708.8 151.3L542.2 212.7M-485.8 591.9L-7653.3 3235.6M23.2 155.9L449.4 218.5M943.8 291.0L21012.6 3235.6M712.0 151.3L570.7 216.0M-673.9 785.4L-6029.4 3235.6M13.4 156.1L421.4 225.9M992.5 323.7L18004.1 3235.6M715.3 151.3L602.1 219.5M-1149.0 1274.2L-4405.5 3235.6M3.4 156.2L387.1 235.0M1069.4 375.2L14995.6 3235.6M722.0 151.4L675.3 227.9M-17.6 156.6L288.4 261.3M1537.3 688.7L8978.6 3235.6M725.3 151.4L718.5 232.8M-28.5 156.7L213.8 281.1M3269.4 1849.4L5970.1 3235.6M728.7 151.4L767.1 238.4M-39.8 156.9L108.5 309.1M732.1 151.5L822.3 244.7M-51.4 157.1L-51.1 351.5M735.6 151.5L885.4 251.9M-63.4 157.3L-322.2 423.6M739.1 151.5L6961.8 3235.6M-75.7 157.5L-6063.9 3235.6M742.6 151.5L8585.7 3235.6M-88.5 157.7L-9072.4 3235.6M749.7 151.6L11833.5 3235.6M-115.2 158.1L-15089.4 3235.6M753.3 151.6L13457.4 3235.6M-129.2 158.3L-18097.9 3235.6M757.0 151.7L15081.4 3235.6M-143.7 158.5L-21106.4 3235.6M760.7 151.7L16705.3 3235.6M-158.7 158.8L-24114.9 3235.6M764.4 151.7L18329.2 3235.6M-174.3 159.0L-27123.4 3235.6M768.1 151.8L19953.1 3235.6M-190.4 159.2L-30131.9 3235.6M771.9 151.8L21577.0 3235.6M-207.0 159.5L-33140.4 3235.6M779.6 151.9L24824.8 3235.6M-242.3 160.1L-39157.4 3235.6M783.4 151.9L26448.7 3235.6M-260.9 160.3L-42165.9 3235.6M787.4 151.9L28072.6 3235.6M-280.3 160.6L-45174.4 3235.6M791.3 152.0L29696.5 3235.6M-300.4 161.0L-48182.9 3235.6M795.3 152.0L31320.4 3235.6M-321.4 161.3L-51191.4 3235.6M799.3 152.0L32944.3 3235.6M-343.3 161.6L-54199.9 3235.6M803.4 152.1L34568.2 3235.6M-366.0 162.0L-57208.3 3235.6M811.7 152.1L37816.0 3235.6M-414.6 162.7L-63225.3 3235.6M815.9 152.2L39439.9 3235.6M-440.6 163.1L-66233.8 3235.6M820.1 152.2L41063.8 3235.6M-467.7 163.6L-69242.3 3235.6M824.4 152.2L42687.7 3235.6M-496.2 164.0L-72250.8 3235.6M828.7 152.3L44311.6 3235.6M-526.1 164.5L-75259.3 3235.6M833.1 152.3L45935.5 3235.6M-557.4 165.0L-78267.8 3235.6M837.5 152.3L47559.4 3235.6M-590.4 165.5L-81276.3 3235.6M846.4 152.4L50807.2 3235.6M-661.6 166.6L-87293.3 3235.6M850.9 152.4L52431.1 3235.6M-700.2 167.2L-90301.8 3235.6M855.5 152.5L54055.1 3235.6M-741.0 167.8L-93310.3 3235.6M860.2 152.5L55679.0 3235.6M-784.3 168.5L-96318.8 3235.6M864.8 152.6L57302.9 3235.6M-830.1 169.2L-99327.3 3235.6M869.6 152.6L58926.8 3235.6M-878.8 170.0L-102335.8 3235.6M874.3 152.6L60550.7 3235.6M-930.7 170.8L-105344.3 3235.6M884.0 152.7L63798.5 3235.6M-1045.2 172.6L-111361.3 3235.6M889.0 152.8L65422.4 3235.6M-1108.5 173.5L-114369.8 3235.6M893.9 152.8L67046.3 3235.6M-1176.6 174.6L-117378.3 3235.6M899.0 152.8L68670.2 3235.6M-1250.0 175.8L-120386.8 3235.6M904.1 152.9L70294.1 3235.6M-1329.2 177.0L-123395.3 3235.6M909.2 152.9L71918.0 3235.6M-1415.1 178.3L-126403.8 3235.6M914.4 153.0L73541.9 3235.6M-1508.4 179.8L-129412.3 3235.6M924.9 153.1L76789.7 3235.6M-1721.8 183.1L-135429.2 3235.6M930.3 153.1L78413.6 3235.6M-1844.5 185.0L-138437.7 3235.6M935.7 153.1L80037.5 3235.6M-1980.2 187.1L-141446.2 3235.6M941.2 153.2L81661.4 3235.6M-2131.1 189.5L-144454.7 3235.6M946.8 153.2L83285.3 3235.6M-2299.7 192.1L-147463.2 3235.6M952.4 153.3L84909.2 3235.6M-2489.5 195.1L-150471.7 3235.6M958.1 153.3L86533.1 3235.6M-2704.8 198.4L-153480.2 3235.6M969.6 153.4L89780.9 3235.6M-3235.0 206.7L-159497.2 3235.6M975.5 153.5L91404.8 3235.6M-3566.7 211.8L-162505.7 3235.6M981.4 153.5L93028.8 3235.6M-3959.1 218.0L-165514.2 3235.6M987.4 153.6L94652.7 3235.6M-4430.4 225.3L-168522.7 3235.6M993.5 153.6L96276.6 3235.6M-5007.2 234.3L-171531.2 3235.6M999.7 153.7L97900.5 3235.6M-5729.2 245.5L-174539.7 3235.6M1005.9 153.7L99524.4 3235.6M-6659.3 260.0L-177548.2 3235.6M1018.6 153.8L102772.2 3235.6M-9649.2 306.6L-183565.2 3235.6M1025.0 153.9L104396.1 3235.6M-12282.5 347.6L-186573.7 3235.6M1031.5 153.9L106020.0 3235.6M-16707.0 416.6L-189582.2 3235.6M1038.1 154.0L107643.9 3235.6M-25692.6 556.6L-192590.7 3235.6M1044.8 154.1L109267.8 3235.6M-53794.9 994.4L-195599.2 3235.6M1051.6 154.1L110891.7 3235.6M1058.5 154.2L112515.6 3235.6M1072.4 154.3L115763.4 3235.6M1079.5 154.3L117387.3 3235.6M1086.8 154.4L119011.2 3235.6M1094.1 154.5L120635.1 3235.6M1101.5 154.5L122259.0 3235.6M1108.9 154.6L123882.9 3235.6M1116.5 154.6L125506.8 3235.6M1132.0 154.8L128754.6 3235.6M1139.9 154.8L130378.6 3235.6M1147.9 154.9L132002.5 3235.6M1156.0 155.0L133626.4 3235.6M1164.2 155.0L135250.3 3235.6M1172.6 155.1L136874.2 3235.6M1181.0 155.2L138498.1 3235.6M1198.3 155.3L141745.9 3235.6M1207.1 155.4L143369.8 3235.6M1216.0 155.5L144993.7 3235.6M1225.1 155.5L146617.6 3235.6M1234.3 155.6L148241.5 3235.6M1243.6 155.7L149865.4 3235.6M1253.0 155.8L151489.3 3235.6M1272.4 155.9L154737.1 3235.6M1282.3 156.0L156361.0 3235.6M1292.3 156.1L157984.9 3235.6M1302.5 156.2L159608.8 3235.6M1312.8 156.3L161232.7 3235.6M1323.3 156.4L162856.6 3235.6M1334.0 156.4L164480.5 3235.6M1355.9 156.6L167728.3 3235.6M1367.0 156.7L169352.3 3235.6M1378.4 156.8L170976.2 3235.6M1389.9 156.9L172600.1 3235.6M1401.7 157.0L174224.0 3235.6M1413.6 157.1L175847.9 3235.6M1425.7 157.2L177471.8 3235.6M1450.5 157.4L180719.6 3235.6M1463.3 157.5L182343.5 3235.6M1476.2 157.6L183967.4 3235.6M1489.4 157.7L185591.3 3235.6M1502.8 157.8L187215.2 3235.6M1516.5 158.0L188839.1 3235.6M1530.4 158.1L190463.0 3235.6" stroke="#67625c" stroke-width="1" fill="none"/>
<path d="M456.0 149.2L-197650.1 3235.6M456.0 149.2L1544.5 158.2M467.8 149.3L-184658.9 3235.6M444.2 149.4L1669.5 160.2M480.2 149.4L-171667.6 3235.6M431.2 149.6L1839.6 163.0M493.2 149.5L-158676.4 3235.6M417.0 149.8L2084.4 166.9M506.8 149.6L-145685.2 3235.6M401.4 150.0L2467.1 173.1M521.1 149.7L-132693.9 3235.6M384.0 150.3L3150.1 184.1M536.2 149.8L-119702.7 3235.6M364.8 150.6L4714.8 209.4M552.1 150.0L-106711.5 3235.6M343.2 150.9L11976.3 326.7M568.8 150.1L-93720.2 3235.6M318.9 151.3L180462.9 3235.6M586.6 150.3L-80729.0 3235.6M291.3 151.7L156394.9 3235.6M605.3 150.4L-67737.8 3235.6M259.7 152.2L132326.9 3235.6M625.3 150.6L-54746.5 3235.6M223.1 152.8L108258.9 3235.6M646.4 150.7L-41755.3 3235.6M180.3 153.5L84191.0 3235.6M668.9 150.9L-28764.1 3235.6M129.5 154.3L60123.0 3235.6M693.0 151.1L-15772.8 3235.6M68.3 155.2L36055.0 3235.6M718.6 151.3L636.7 223.5M-7.0 156.4L344.0 246.5M1208.6 468.5L11987.1 3235.6M746.1 151.6L10209.6 3235.6M-101.6 157.9L-12080.9 3235.6M775.7 151.8L23200.9 3235.6M-224.3 159.8L-36148.9 3235.6M807.5 152.1L36192.1 3235.6M-389.8 162.4L-60216.8 3235.6M841.9 152.4L49183.3 3235.6M-625.0 166.0L-84284.8 3235.6M879.2 152.7L62174.6 3235.6M-986.0 171.6L-108352.8 3235.6M919.6 153.0L75165.8 3235.6M-1610.2 181.4L-132420.8 3235.6M963.8 153.4L88157.0 3235.6M-2950.9 202.3L-156488.7 3235.6M1012.2 153.8L101148.3 3235.6M-7902.6 279.4L-180556.7 3235.6M1065.4 154.2L114139.5 3235.6M1124.2 154.7L127130.7 3235.6M1189.6 155.2L140122.0 3235.6M1262.6 155.9L153113.2 3235.6M1344.8 156.5L166104.4 3235.6M1438.0 157.3L179095.7 3235.6M1544.5 158.2L192086.9 3235.6" stroke="#908c88" stroke-width="1.2" fill="none"/>
</g>
<polygon points="492.4,207.0 885.4,251.9 5337.9,3235.6 -3055.4,3235.6 -322.2,423.6" fill="#ffffff"/>
<path d="M492.4 207.0L-322.2 423.6M492.4 207.0L885.4 251.9M516.2 209.7L-385.0 488.2M472.7 212.3L910.1 268.4M542.2 212.7L-485.8 591.9M449.4 218.5L943.8 291.0M570.7 216.0L-673.9 785.4M421.4 225.9L992.5 323.7M602.1 219.5L-1149.0 1274.2M387.1 235.0L1069.4 375.2M636.7 223.5L-2781.6 3235.6M344.0 246.5L1208.6 468.5M675.3 227.9L-1157.7 3235.6M288.4 261.3L1537.3 688.7M718.5 232.8L466.2 3235.6M213.8 281.1L3269.4 1849.4M767.1 238.4L2090.1 3235.6M108.5 309.1L2961.6 3235.6M822.3 244.7L3714.0 3235.6M-51.1 351.5L-46.9 3235.6M885.4 251.9L5337.9 3235.6M-322.2 423.6L-3055.4 3235.6" stroke="#f0f3f7" stroke-width="1" fill="none"/>
<polygon points="492.4,207.0 885.4,251.9 5337.9,3235.6 -3055.4,3235.6 -322.2,423.6" fill="none" stroke="#ffd000" stroke-width="2" stroke-linejoin="bevel"/>

<path d="M31.4 166.2L344.0 246.5" stroke="#f0506e" stroke-width="2" fill="none"/>
<path d="M344.0 246.5L550.5 299.5" stroke="#f4606a" stroke-width="1" stroke-dasharray="1.5 2" fill="none"/>
<path d="M701 338.5 L848 377" stroke="#f4606a" stroke-width="1" stroke-dasharray="1.5 2" fill="none"/>
<path d="M724.4 146.3L636.7 223.5" stroke="#4aa8f0" stroke-width="2" fill="none"/>
<path d="M636.7 223.5L550.5 299.5" stroke="#5ab0f4" stroke-width="1" fill="none"/>
<path d="M446.5 390 L328 493" stroke="#5ab0f4" stroke-width="1" fill="none"/>
</svg>
<svg class=a style="left:253px;top:106px" width="595" height="387" viewBox="253 106 595 387">
<polygon points="514,227 521.5,245 525.6,323 518,300" fill="#e8ecf5"/>
<polygon points="521.5,245 608.5,240.7 602,315 525.6,322.9" fill="#76808e"/>
<polygon points="527.4,277.8 536.8,272.2 536.8,286.8 528.5,294" fill="#e64c6c"/>
<polygon points="572.4,267.3 589.1,270 588.2,286.4 572.2,283" fill="#42a2f2"/>
<polygon points="553.7,324 560.5,317.3 575.1,321.8 568.4,329.2" fill="#b4e46c"/>
<path d="M636.7 299.0 L637.1 299.8 L637.5 300.5 L637.8 301.2 L638.2 301.9 L638.5 302.7 L638.8 303.4 L639.0 304.2 L639.3 305.0 L639.5 305.7 L639.7 306.5 L639.8 307.3 L640.0 308.0 L640.1 308.8 L640.1 309.6 L640.2 310.4 L640.2 311.2 L640.2 312.0 L640.1 312.8 L640.1 313.6 L640.0 314.4 L639.8 315.3 L639.7 316.1 L639.5 316.9 L639.2 317.7 L639.0 318.6 L638.7 319.4 L638.3 320.2 L638.0 321.0 L637.6 321.9 L637.2 322.7 L636.7 323.5 L636.2 324.3 L635.7 325.2 L635.1 326.0 L634.5 326.8 L633.8 327.6 L633.2 328.4 L632.5 329.3 L631.7 330.1 L630.9 330.9 L630.1 331.7 L629.2 332.5 L628.3 333.3 L627.4 334.0 L626.4 334.8 L625.4 335.6 L624.4 336.4 L623.3 337.1 L622.2 337.9 L621.1 338.6 L619.9 339.3 L618.7 340.0 L617.4 340.8 L616.1 341.5 L614.8 342.1 L613.4 342.8 L612.0 343.5 L610.6 344.1 L609.1 344.8 L607.6 345.4 L606.1 346.0 L604.6 346.6 L603.0 347.2 L601.4 347.7 L599.7 348.3 L598.0 348.8 L596.3 349.3 L594.6 349.8 L592.9 350.3 L591.1 350.7 L589.3 351.2 L587.5 351.6 L585.6 352.0 L583.7 352.4 L581.8 352.7 L579.9 353.1 L578.0 353.4 L576.1 353.7 L574.1 354.0 L572.1 354.2 L570.1 354.5 L568.1 354.7 L566.1 354.9 L564.1 355.0 L562.1 355.2 L560.0 355.3 L558.0 355.4 L555.9 355.4 L553.9 355.5 L551.8 355.5 L549.8 355.5 L547.7 355.5 L545.7 355.5 L543.6 355.4 L541.6 355.3 L539.5 355.2 L537.5 355.1 L535.5 354.9 L533.4 354.7 L531.4 354.5 L529.4 354.3 L527.5 354.0 L525.5 353.8 L523.5 353.5 L521.6 353.2 L519.7 352.8 L517.8 352.5 L515.9 352.1 L514.1 351.7 L512.2 351.3 L510.4 350.9 L508.6 350.4 L506.9 349.9 L505.1 349.5 L503.4 348.9 L501.7 348.4 L500.1 347.9 L498.5 347.3 L496.9 346.7 L495.3 346.2 L493.8 345.6 L492.3 344.9 L490.8 344.3 L489.4 343.7 L488.0 343.0 L486.6 342.3 L485.3 341.6 L484.0 341.0 L482.7 340.2 L481.5 339.5 L480.3 338.8 L479.1 338.1 L478.0 337.3 L476.9 336.6 L475.9 335.8 L474.8 335.0 L473.9 334.3 L472.9 333.5 L472.0 332.7 L471.1 331.9 L470.3 331.1 L469.5 330.3 L468.8 329.5 L468.0 328.7 L467.3 327.9 L466.7 327.0 L466.1 326.2 L465.5 325.4 L465.0 324.6 L464.4 323.7 L464.0 322.9 L463.5 322.1 L463.1 321.3 L462.8 320.4 L462.4 319.6 L462.1 318.8 L461.8 318.0 L461.6 317.1 L461.4 316.3 L461.2 315.5 L461.1 314.7 L461.0 313.9 L460.9 313.1 L460.8 312.2 L460.8 311.4 L460.8 310.6 L460.9 309.8 L460.9 309.1 L461.0 308.3 L461.1 307.5 L461.3 306.7 L461.5 305.9 L461.7 305.2 L461.9 304.4 L462.2 303.7 L462.4 302.9 L462.7 302.2 L463.1 301.4 L463.4 300.7 L463.8 300.0 L464.2 299.2" stroke="#ace070" stroke-width="2.5" fill="none" stroke-linecap="round"/><path d="M572.2 216.0 L571.7 215.4 L571.2 214.9 L570.7 214.4 L570.1 213.9 L569.6 213.4 L569.0 213.0 L568.4 212.5 L567.8 212.1 L567.2 211.8 L566.6 211.4 L566.0 211.1 L565.4 210.8 L564.7 210.5 L564.1 210.2 L563.4 210.0 L562.7 209.8 L562.0 209.6 L561.3 209.5 L560.6 209.4 L559.9 209.3 L559.2 209.2 L558.4 209.2 L557.7 209.2 L556.9 209.2 L556.2 209.3 L555.4 209.4 L554.6 209.5 L553.8 209.7 L553.0 209.9 L552.2 210.1 L551.3 210.4 L550.5 210.7 L549.7 211.0 L548.8 211.4 L548.0 211.8 L547.1 212.2 L546.2 212.7 L545.3 213.2 L544.5 213.7 L543.6 214.3 L542.7 214.9 L541.8 215.6 L540.9 216.3 L540.0 217.0 L539.1 217.8 L538.1 218.6 L537.2 219.4 L536.3 220.3 L535.4 221.2 L534.5 222.2 L533.5 223.2 L532.6 224.2 L531.7 225.3 L530.7 226.4 L529.8 227.5 L528.9 228.7 L528.0 229.9 L527.1 231.2 L526.1 232.4 L525.2 233.8 L524.3 235.1 L523.4 236.5 L522.5 237.9 L521.6 239.4 L520.7 240.9 L519.9 242.4 L519.0 244.0 L518.1 245.5 L517.3 247.1 L516.4 248.8 L515.6 250.5 L514.8 252.2 L514.0 253.9 L513.2 255.6 L512.4 257.4 L511.6 259.2 L510.9 261.0 L510.1 262.9 L509.4 264.7 L508.7 266.6 L508.0 268.5 L507.3 270.4 L506.6 272.4 L506.0 274.3 L505.4 276.3 L504.7 278.3 L504.1 280.2 L503.6 282.2 L503.0 284.2 L502.5 286.2 L502.0 288.3 L501.5 290.3 L501.0 292.3 L500.5 294.3 L500.1 296.4 L499.7 298.4 L499.3 300.4 L498.9 302.4 L498.6 304.4 L498.3 306.4 L498.0 308.4 L497.7 310.4 L497.4 312.4 L497.2 314.4 L497.0 316.4 L496.8 318.3 L496.6 320.2 L496.5 322.1 L496.4 324.0 L496.3 325.9 L496.2 327.8 L496.2 329.6 L496.1 331.5 L496.1 333.3 L496.2 335.0 L496.2 336.8 L496.3 338.5 L496.3 340.2 L496.4 341.9 L496.6 343.5 L496.7 345.2 L496.9 346.7 L497.1 348.3 L497.3 349.8 L497.5 351.4 L497.7 352.8 L498.0 354.3 L498.3 355.7 L498.6 357.1 L498.9 358.4 L499.2 359.7 L499.6 361.0 L500.0 362.2 L500.3 363.4 L500.7 364.6 L501.2 365.8 L501.6 366.9 L502.0 367.9 L502.5 369.0 L503.0 370.0 L503.5 370.9 L504.0 371.9 L504.5 372.8 L505.0 373.6 L505.5 374.5 L506.1 375.3 L506.6 376.0 L507.2 376.7 L507.8 377.4 L508.4 378.1 L509.0 378.7 L509.6 379.3 L510.2 379.9 L510.8 380.4 L511.5 380.9 L512.1 381.3 L512.7 381.8 L513.4 382.1 L514.0 382.5 L514.7 382.8 L515.4 383.1 L516.0 383.4 L516.7 383.6 L517.4 383.8 L518.1 384.0 L518.8 384.2 L519.5 384.3 L520.2 384.4 L520.9 384.4 L521.6 384.5 L522.3 384.5 L523.0 384.4 L523.7 384.4 L524.4 384.3 L525.1 384.2 L525.8 384.1 L526.6 383.9 L527.3 383.8 L528.0 383.6 L528.7 383.3 L529.4 383.1" stroke="#f27a8e" stroke-width="2.5" fill="none" stroke-linecap="round"/><path d="M605.8 365.3 L606.9 364.7 L608.0 364.2 L609.0 363.6 L610.1 363.0 L611.1 362.4 L612.1 361.8 L613.2 361.1 L614.2 360.4 L615.1 359.7 L616.1 358.9 L617.1 358.2 L618.0 357.4 L619.0 356.6 L619.9 355.7 L620.8 354.9 L621.7 354.0 L622.5 353.1 L623.4 352.2 L624.2 351.2 L625.0 350.2 L625.8 349.2 L626.6 348.2 L627.3 347.2 L628.1 346.1 L628.8 345.0 L629.5 343.9 L630.2 342.8 L630.8 341.6 L631.4 340.4 L632.0 339.2 L632.6 338.0 L633.2 336.8 L633.7 335.5 L634.2 334.2 L634.7 332.9 L635.1 331.6 L635.6 330.3 L636.0 328.9 L636.4 327.5 L636.7 326.1 L637.0 324.7 L637.3 323.3 L637.6 321.9 L637.8 320.4 L638.0 318.9 L638.2 317.4 L638.4 315.9 L638.5 314.4 L638.6 312.9 L638.6 311.3 L638.6 309.7 L638.6 308.2 L638.6 306.6 L638.5 305.0 L638.4 303.4 L638.3 301.8 L638.1 300.2 L637.9 298.5 L637.7 296.9 L637.4 295.3 L637.1 293.6 L636.8 292.0 L636.4 290.3 L636.0 288.6 L635.6 287.0 L635.1 285.3 L634.6 283.7 L634.1 282.0 L633.6 280.3 L633.0 278.7 L632.3 277.0 L631.7 275.4 L631.0 273.7 L630.3 272.1 L629.5 270.4 L628.7 268.8 L627.9 267.2 L627.1 265.6 L626.2 264.0 L625.3 262.4 L624.3 260.8 L623.4 259.2 L622.4 257.7 L621.4 256.1 L620.3 254.6 L619.2 253.1 L618.1 251.6 L617.0 250.1 L615.9 248.6 L614.7 247.2 L613.5 245.8 L612.2 244.4 L611.0 243.0 L609.7 241.6 L608.4 240.3 L607.1 239.0 L605.8 237.7 L604.4 236.4 L603.0 235.2 L601.6 233.9 L600.2 232.7 L598.8 231.6 L597.3 230.4 L595.9 229.3 L594.4 228.2 L592.9 227.2 L591.4 226.2 L589.9 225.2 L588.4 224.2 L586.8 223.3 L585.3 222.4 L583.7 221.5 L582.2 220.6 L580.6 219.8 L579.0 219.1 L577.4 218.3 L575.9 217.6 L574.3 216.9 L572.7 216.3 L571.1 215.7 L569.5 215.1 L567.9 214.5 L566.3 214.0 L564.7 213.5 L563.1 213.1 L561.5 212.7 L559.9 212.3 L558.3 211.9 L556.8 211.6 L555.2 211.3 L553.6 211.1 L552.1 210.9 L550.5 210.7 L549.0 210.5 L547.4 210.4 L545.9 210.3 L544.4 210.3 L542.9 210.2 L541.4 210.2 L539.9 210.3 L538.4 210.3 L536.9 210.4 L535.5 210.6 L534.1 210.7 L532.6 210.9 L531.2 211.1 L529.8 211.4 L528.5 211.7 L527.1 212.0 L525.8 212.3 L524.4 212.6 L523.1 213.0 L521.8 213.4 L520.6 213.9 L519.3 214.3 L518.1 214.8 L516.9 215.3 L515.7 215.9 L514.5 216.4 L513.3 217.0 L512.2 217.6 L511.1 218.3 L510.0 218.9 L508.9 219.6 L507.8 220.3 L506.8 221.0 L505.8 221.8 L504.8 222.5 L503.8 223.3 L502.9 224.1 L501.9 224.9 L501.0 225.7 L500.1 226.6 L499.3 227.4 L498.4 228.3 L497.6 229.2 L496.8 230.1 L496.0 231.1 L495.3 232.0 L494.5 233.0 L493.8 233.9 L493.1 234.9 L492.5 235.9" stroke="#62b2f6" stroke-width="2.5" fill="none" stroke-linecap="round"/>
<path d="M550.5 300 L550.5 180" stroke="#9ad81e" stroke-width="2.6"/><path d="M550.5 150 L550.5 106" stroke="#9ad81e" stroke-width="1.3"/>
<polygon points="550,146 540,183 559.5,183" fill="#9ad81e"/>
<path d="M550.5 300 L690 336" stroke="#f0506e" stroke-width="2.5"/>
<polygon points="701.5,338.5 663.7,321.5 663.7,337.5" fill="#f27a8e"/>
<path d="M550.5 300 L470 368" stroke="#5ab0f4" stroke-width="2.5"/>
<path d="M446.5 390 L469 357 Q478 358 482 374 Z" fill="#70b8f8"/>
<line x1="800.3" y1="153.9" x2="799.8" y2="127.4" stroke="#8fd400" stroke-width="3"/>
<line x1="800.3" y1="153.9" x2="826.4" y2="160.9" stroke="#e23c58" stroke-width="3"/>
<line x1="800.3" y1="153.9" x2="785.7" y2="166.4" stroke="#2e90e0" stroke-width="3"/>
<circle cx="814.3" cy="140.9" r="8" fill="#3381c2" stroke="#5ba8ea" stroke-width="1"/>
<circle cx="773.3" cy="146.6" r="8.5" fill="#d63a52"/>
<circle cx="799.8" cy="180.4" r="8" fill="#958418" stroke="#9ac420" stroke-width="1.5"/>
<circle cx="799.8" cy="127.4" r="8.7" fill="#8fd400"/>
<circle cx="826.4" cy="160.9" r="8.5" fill="#e23c58"/>
<circle cx="785.7" cy="166.4" r="8.5" fill="#2e90e0"/>
<text x="799.8" y="132.5" font-size="12" text-anchor="middle" fill="#1a1a1a" font-family="Liberation Sans">Y</text>
<text x="826.4" y="165.5" font-size="12" text-anchor="middle" fill="#1a1a1a" font-family="Liberation Sans">X</text>
<text x="785.7" y="171" font-size="12" text-anchor="middle" fill="#1a1a1a" font-family="Liberation Sans">Z</text>
</svg>
<div class=a style="left:261px;top:114px;width:104px;height:29px;background:rgba(100,104,115,.82);border-radius:3px"></div>
<svg class=a style="left:269px;top:118px;" width="8" height="20" viewBox="0 0 8 20"><circle cx="4" cy="4" r="2.2" fill="#dcdcdc"/><circle cx="4" cy="10" r="2.2" fill="#dcdcdc"/><circle cx="4" cy="16" r="2.2" fill="#dcdcdc"/></svg>
<div class=t style="left:285px;top:121px;color:#dcdde0;font-size:14px;font-weight:normal;letter-spacing:0.237px">Perspective</div>
<div class=a style="left:251px;top:499px;width:599px;height:372px;background:#363c4a;"></div>
<div class=a style="left:255px;top:505px;width:527px;height:292px;background:#21252d;border-radius:3px"></div>
<div class=a style="left:255px;top:801px;width:527px;height:31px;background:#232832;border-radius:3px;border-bottom:2px solid #1c1f26"></div>
<div class=t style="left:261px;top:808px;color:#85888e;font-size:14px;font-weight:normal;letter-spacing:0.208px">Filter Messages</div>
<svg class=a style="left:761px;top:809px;" width="14" height="14" viewBox="0 0 14 14"><circle cx="5.5" cy="5.5" r="4" stroke="#e0e0e0" stroke-width="2" fill="none"/><path d="M8.5 8.5 L12.5 12.5" stroke="#e0e0e0" stroke-width="2.2" stroke-linecap="round"/></svg>
<svg class=a style="left:793px;top:511px;" width="14" height="15" viewBox="0 0 14 15"><path d="M7 0 V6" stroke="#e0e0e0" stroke-width="2"/><path d="M2 6 H12 L13 10 H1 Z" fill="#e0e0e0"/><path d="M1 10.5 H13 V14.5 L1 15 Z" fill="#cfcfcf"/></svg>
<svg class=a style="left:824px;top:510px;" width="16" height="16" viewBox="0 0 16 16"><path d="M1 11 V2 Q1 1 2 1 H10" stroke="#e0e0e0" stroke-width="2" fill="none"/><rect x="5" y="5" width="10" height="10" stroke="#e0e0e0" stroke-width="2" fill="none"/></svg>
<div class=a style="left:785px;top:536px;width:62px;height:1px;background:#4b5060;"></div>
<svg class=a style="left:791px;top:547px;" width="17" height="15" viewBox="0 0 17 15"><path d="M0 1 H15 M6 6.5 H15 M6 12 H15" stroke="#e0e0e0" stroke-width="2"/><path d="M3 14 V6" stroke="#e0e0e0" stroke-width="2"/><path d="M0 7.5 L3 3.5 L6 7.5 Z" fill="#e0e0e0"/></svg>
<div class=a style="left:818px;top:543px;width:28px;height:26px;background:#232832;border-radius:3px"></div>
<svg class=a style="left:824px;top:549px;" width="14" height="14" viewBox="0 0 14 14"><circle cx="5.5" cy="5.5" r="4" stroke="#6cb4f4" stroke-width="2" fill="none"/><path d="M8.5 8.5 L12.5 12.5" stroke="#6cb4f4" stroke-width="2.2" stroke-linecap="round"/></svg>
<div class=a style="left:785px;top:574px;width:62px;height:1px;background:#4b5060;"></div>
<div class=a style="left:786px;top:581px;width:60px;height:31px;background:#232832;border-radius:3px;border-bottom:2px solid #70bafa"></div>
<svg class=a style="left:793px;top:589px;" width="14" height="14" viewBox="0 0 14 14"><rect x="0" y="0" width="14" height="14" rx="2.5" fill="#e0e0e0"/><rect x="6" y="2.5" width="2" height="6" fill="#111"/><rect x="6" y="10" width="2" height="2" fill="#111"/></svg>
<div class=t style="left:821px;top:588px;color:#70bafa;font-size:14px;font-weight:normal;letter-spacing:0.219px">0</div>
<div class=a style="left:786px;top:616px;width:60px;height:31px;background:#232832;border-radius:3px;border-bottom:2px solid #70bafa"></div>
<svg class=a style="left:793px;top:624px;" width="14" height="14" viewBox="0 0 14 14"><circle cx="7" cy="7" r="7" fill="#f06a7e"/><path d="M4.2 4.2 L9.8 9.8 M9.8 4.2 L4.2 9.8" stroke="#1a1a1a" stroke-width="1.8"/></svg>
<div class=t style="left:821px;top:623px;color:#70bafa;font-size:14px;font-weight:normal;letter-spacing:0.219px">0</div>
<div class=a style="left:786px;top:651px;width:60px;height:31px;background:#232832;border-radius:3px;border-bottom:2px solid #70bafa"></div>
<svg class=a style="left:793px;top:659px;" width="14" height="14" viewBox="0 0 14 14"><circle cx="7" cy="7" r="7" fill="#e6e05a"/><rect x="6" y="2.5" width="2" height="6" fill="#111"/><rect x="6" y="10" width="2" height="2" fill="#111"/></svg>
<div class=t style="left:821px;top:658px;color:#70bafa;font-size:14px;font-weight:normal;letter-spacing:0.219px">0</div>
<div class=a style="left:786px;top:686px;width:60px;height:31px;background:#232832;border-radius:3px;border-bottom:2px solid #70bafa"></div>
<svg class=a style="left:795px;top:694px;" width="10" height="14" viewBox="0 0 10 14"><path d="M3 1 H7 V9 L5 13 L3 9 Z" fill="#e0e0e0"/><rect x="4" y="3" width="2" height="4" fill="#222"/></svg>
<div class=t style="left:821px;top:693px;color:#70bafa;font-size:14px;font-weight:normal;letter-spacing:0.219px">0</div>
<svg class=a style="left:260px;top:843px;" width="10" height="16" viewBox="0 0 10 16"><path d="M7 1.5 L2.5 8 L7 14.5" stroke="#8b8e94" stroke-width="1.8" fill="none"/></svg>
<div class=t style="left:286px;top:843px;color:#70bafa;font-size:14px;font-weight:normal;letter-spacing:0.823px">Output</div>
<div class=t style="left:348px;top:843px;color:#cdcfd2;font-size:14px;font-weight:normal;letter-spacing:0.598px">Debugger</div>
<div class=t style="left:431px;top:843px;color:#cdcfd2;font-size:14px;font-weight:normal;letter-spacing:0.497px">Audio</div>
<div class=t style="left:486px;top:843px;color:#cdcfd2;font-size:14px;font-weight:normal;letter-spacing:0.632px">Animation</div>
<div class=a style="left:570px;top:843px;width:72px;height:18px;overflow:hidden"><div class=t style="left:0;top:0;color:#cdcfd2;letter-spacing:0.3px">Shader Editor</div></div>
<svg class=a style="left:651px;top:843px;" width="10" height="16" viewBox="0 0 10 16"><path d="M2.5 1.5 L7 8 L2.5 14.5" stroke="#e0e0e0" stroke-width="1.8" fill="none"/></svg>
<svg class=a style="left:678px;top:843px;" width="14" height="14" viewBox="0 0 14 14"><path d="M7 1 Q2.5 1 2.5 6 V9.5 L1 11.5 H13 L11.5 9.5 V6 Q11.5 1 7 1 Z" fill="#4e535d"/><circle cx="7" cy="12.5" r="1.6" fill="#4e535d"/></svg>
<div class=t style="left:702px;top:843px;color:#8b8e94;font-size:14px;font-weight:normal;letter-spacing:0.219px">4.5.1.stable</div>
<svg class=a style="left:795px;top:844px;" width="11" height="14" viewBox="0 0 11 14"><rect x="0" y="0" width="10.5" height="2.4" fill="#e0e0e0"/><rect x="2.2" y="2.4" width="6" height="5.6" fill="#e0e0e0"/><rect x="0" y="8" width="10.5" height="2.4" fill="#e0e0e0"/><rect x="4.4" y="10.4" width="1.8" height="3.6" fill="#e0e0e0"/></svg>
<svg class=a style="left:824px;top:844px;" width="15" height="15" viewBox="0 0 15 15"><path d="M0 1 H15" stroke="#e0e0e0" stroke-width="2"/><path d="M4 14 V6 M11 14 V6" stroke="#e0e0e0" stroke-width="2"/><path d="M1 7 L4 3 L7 7 Z M8 7 L11 3 L14 7 Z" fill="#e0e0e0"/></svg>
<div class=a style="left:854px;top:2px;width:524px;height:28px;background:#232832;border-radius:3px 3px 0 0"></div>
<div class=a style="left:854px;top:2px;width:85px;height:28px;background:#363c4a;"></div>
<div class=a style="left:854px;top:2px;width:85px;height:2px;background:#70bafa;"></div>
<div class=t style="left:864px;top:8px;color:#e0e0e0;font-size:14px;font-weight:normal;letter-spacing:0.561px">Inspector</div>
<div class=t style="left:950px;top:8px;color:#8b8e94;font-size:14px;font-weight:normal;letter-spacing:0.539px">Node</div>
<div class=t style="left:1008px;top:8px;color:#8b8e94;font-size:14px;font-weight:normal;letter-spacing:0.511px">History</div>
<div class=t style="left:1078px;top:8px;color:#8b8e94;font-size:14px;font-weight:normal;letter-spacing:0.256px">Variable Values</div>
<div class=t style="left:1200px;top:8px;color:#8b8e94;font-size:14px;font-weight:normal;letter-spacing:0.068px">Events</div>
<svg class=a style="left:1366px;top:6px;" width="8" height="20" viewBox="0 0 8 20"><circle cx="4" cy="4" r="2.2" fill="#8b8e94"/><circle cx="4" cy="10" r="2.2" fill="#8b8e94"/><circle cx="4" cy="16" r="2.2" fill="#8b8e94"/></svg>
<div class=a style="left:854px;top:30px;width:524px;height:841px;background:#363c4a;"></div>
<svg class=a style="left:866px;top:42px;" width="14" height="15" viewBox="0 0 14 15"><path d="M1 0 H7.5 L11 3.5 V7 H7 V15 H1 Z" fill="#e0e0e0"/><path d="M8 0 L11 3 H8 Z" fill="#363c4a" opacity=".0"/><path d="M10 7.5 V14.5 M6.5 11 H13.5" stroke="#8de05a" stroke-width="2.4"/></svg>
<svg class=a style="left:897px;top:43px;" width="15" height="14" viewBox="0 0 15 14"><path d="M0.5 2 Q0.5 0.5 2 0.5 H5.5 L7 2.5 H12 Q13 2.5 13 3.5 V5 H4 L1.5 13.5 H0.5 Z" fill="#e0e0e0"/><path d="M4.5 6 H14.5 L12.5 13.5 H2 Z" fill="#e0e0e0"/></svg>
<svg class=a style="left:929px;top:42px;" width="15" height="15" viewBox="0 0 15 15"><path d="M0.5 2 Q0.5 0.5 2 0.5 H12 L14.5 3 V13 Q14.5 14.5 13 14.5 H2 Q0.5 14.5 0.5 13 Z" fill="#e0e0e0"/><rect x="4" y="0.5" width="6" height="4.5" fill="#363c4a"/><rect x="7" y="1" width="2" height="3" fill="#e0e0e0"/><circle cx="7.5" cy="10" r="1.8" fill="#363c4a"/></svg>
<svg class=a style="left:963px;top:38px;" width="8" height="22" viewBox="0 0 8 22"><circle cx="4" cy="3.5" r="2.4" fill="#e0e0e0"/><circle cx="4" cy="11" r="2.4" fill="#e0e0e0"/><circle cx="4" cy="18" r="2.4" fill="#e0e0e0"/></svg>
<svg class=a style="left:1303px;top:42px;" width="10" height="16" viewBox="0 0 10 16"><path d="M7.5 1.5 L3 8 L7.5 14.5" stroke="#e0e0e0" stroke-width="1.8" fill="none"/></svg>
<svg class=a style="left:1327px;top:42px;" width="10" height="16" viewBox="0 0 10 16"><path d="M2.5 1.5 L7 8 L2.5 14.5" stroke="#8b8e94" stroke-width="1.8" fill="none"/></svg>
<svg class=a style="left:1352px;top:42px;" width="16" height="15" viewBox="0 0 16 15"><path d="M4 11.5 A5.8 5.8 0 1 0 3.2 5" stroke="#e0e0e0" stroke-width="2" fill="none"/><path d="M0.5 6 H6 L3.2 10 Z" fill="#e0e0e0"/><path d="M9 4 V8 H12" stroke="#e0e0e0" stroke-width="1.8" fill="none"/></svg>
<div class=a style="left:858px;top:66px;width:484px;height:30px;background:#232832;border-radius:3px"></div>
<div class=a style="left:863px;top:74px;width:15px;height:15px;background:#363c52;border-radius:2px;box-shadow:inset 0 0 0 1px #2a2e3a;color:#f4f4f4;font:14px 'Liberation Mono',monospace;line-height:17px;text-align:center;will-change:transform">C</div>
<div class=t style="left:886px;top:73px;color:#cdcfd2;font-size:14px;font-weight:normal;letter-spacing:0.286px">cube-color.tres</div>
<svg class=a style="left:1324px;top:77px;" width="12" height="8" viewBox="0 0 12 8"><path d="M1.5 1.5 L6 6 L10.5 1.5" stroke="#e0e0e0" stroke-width="2" fill="none"/></svg>
<svg class=a style="left:1351px;top:73px;" width="18" height="17" viewBox="0 0 18 17"><circle cx="10" cy="5" r="3.5" stroke="#e0e0e0" stroke-width="1.8" fill="none"/><path d="M7.5 7.5 L5 10" stroke="#e0e0e0" stroke-width="1.8"/><text x="9" y="16.5" font-size="7" font-weight="bold" fill="#e0e0e0" text-anchor="middle" font-family="Liberation Sans">DOC</text></svg>
<div class=a style="left:858px;top:101px;width:484px;height:31px;background:#232832;border-radius:3px;border-bottom:2px solid #1c1f26"></div>
<div class=t style="left:864px;top:108px;color:#85888e;font-size:14px;font-weight:normal;letter-spacing:0.357px">Filter Properties</div>
<svg class=a style="left:1321px;top:109px;" width="14" height="14" viewBox="0 0 14 14"><circle cx="5.5" cy="5.5" r="4" stroke="#e0e0e0" stroke-width="2" fill="none"/><path d="M8.5 8.5 L12.5 12.5" stroke="#e0e0e0" stroke-width="2.2" stroke-linecap="round"/></svg>
<svg class=a style="left:1353px;top:109px;" width="14" height="15" viewBox="0 0 14 15"><path d="M3 0 V9" stroke="#e0e0e0" stroke-width="1.8"/><path d="M1 7 H5 V13 Q3 15 1 13 Z" fill="#e0e0e0"/><path d="M10.5 6 V15" stroke="#e0e0e0" stroke-width="1.8"/><path d="M8 1 V4 Q10.5 7 13 4 V1" stroke="#e0e0e0" stroke-width="1.8" fill="none"/></svg>
<div class=a style="left:858px;top:136px;width:516px;height:731px;background:#21252d;border-radius:3px"></div>
<div class=a style="left:864px;top:141px;width:504px;height:25px;background:#40444e;border-radius:3px"></div>
<div class=a style="left:1057px;top:146px;width:16px;height:16px;background:#363c52;border-radius:2px;box-shadow:inset 0 0 0 1px #2a2e3a;color:#f4f4f4;font:14px 'Liberation Mono',monospace;line-height:18px;text-align:center;will-change:transform">C</div>
<div class=t style="left:1079px;top:144px;color:#dadbdd;font-size:14px;font-weight:bold;letter-spacing:0.314px">ColorVariable</div>
<div class=a style="left:864px;top:166px;width:504px;height:28px;background:#1e2128;"></div>
<div class=a style="left:1117px;top:166px;width:251px;height:28px;background:#1f2229;"></div>
<div class=t style="left:872px;top:170px;color:#cdcfd2;font-size:14px;font-weight:normal;letter-spacing:0.429px">Initial Value</div>
<svg class=a style="left:1091px;top:173px;" width="15" height="14" viewBox="0 0 15 14"><path d="M4.5 3.5 A5 5 0 1 1 5.5 12.5" stroke="#e0e0e0" stroke-width="2" fill="none"/><path d="M0.5 4.5 L6 2 L5 8 Z" fill="#e0e0e0"/></svg>
<div class=a style="left:1122px;top:171px;width:240px;height:18px;background:#ff0000;"></div>
<div class=a style="left:864px;top:194px;width:504px;height:25px;background:#40444e;border-radius:3px"></div>
<div class=a style="left:1059px;top:199px;width:16px;height:16px;background:#363c52;border-radius:3px"></div>
<div class=t style="left:1081px;top:197px;color:#dadbdd;font-size:14px;font-weight:bold;letter-spacing:0.277px">BaseVariable</div>
<div class=a style="left:864px;top:219px;width:504px;height:62px;background:#1e2128;"></div>
<div class=a style="left:1117px;top:219px;width:251px;height:62px;background:#1f2229;"></div>
<div class=t style="left:872px;top:225px;color:#cdcfd2;font-size:14px;font-weight:normal;letter-spacing:0.323px">Debug Logs</div>
<div class=t style="left:872px;top:256px;color:#cdcfd2;font-size:14px;font-weight:normal;letter-spacing:0.026px">Save to Device</div>
<div class=a style="left:1123px;top:227px;width:14px;height:14px;background:#464a54;border-radius:3px"></div>
<div class=a style="left:1123px;top:258px;width:14px;height:14px;background:#464a54;border-radius:3px"></div>
<div class=t style="left:1146px;top:226px;color:#cdcfd2;font-size:14px;font-weight:normal;letter-spacing:0.453px">On</div>
<div class=t style="left:1146px;top:257px;color:#cdcfd2;font-size:14px;font-weight:normal;letter-spacing:0.453px">On</div>
<div class=a style="left:864px;top:281px;width:504px;height:25px;background:#40444e;border-radius:3px"></div>
<svg class=a style="left:1073px;top:287px;" width="15" height="14" viewBox="0 0 15 14"><path d="M7.5 0.5 L14 3.5 V10.5 L7.5 13.5 L1 10.5 V3.5 Z" fill="#e0e0e0"/><path d="M1.5 3.8 L7.5 6.8 L13.5 3.8 M7.5 6.8 V13.5" stroke="#40444e" stroke-width="1.4" fill="none"/></svg>
<div class=t style="left:1095px;top:284px;color:#dadbdd;font-size:14px;font-weight:bold;letter-spacing:0.021px">Resource</div>
<div class=a style="left:864px;top:306px;width:504px;height:25px;background:#262a33;"></div>
<svg class=a style="left:869px;top:313px;" width="7" height="10" viewBox="0 0 7 10"><path d="M1.5 1 L5.5 5 L1.5 9" stroke="#8b8e94" stroke-width="1.8" fill="none"/></svg>
<div class=t style="left:880px;top:309px;color:#dadbdd;font-size:14px;font-weight:bold;letter-spacing:0.021px">Resource</div>
<div class=t style="left:1297px;top:309px;color:#8b8e94;font-size:14px;font-weight:normal;letter-spacing:0.150px">(1 change)</div>
<div class=a style="left:864px;top:331px;width:504px;height:25px;background:#40444e;border-radius:3px"></div>
<svg class=a style="left:1063px;top:337px;" width="15" height="14" viewBox="0 0 15 14"><path d="M7.5 0.5 L14 3.5 V10.5 L7.5 13.5 L1 10.5 V3.5 Z" fill="#e0e0e0"/><path d="M1.5 3.8 L7.5 6.8 L13.5 3.8 M7.5 6.8 V13.5" stroke="#40444e" stroke-width="1.4" fill="none"/></svg>
<div class=t style="left:1085px;top:334px;color:#dadbdd;font-size:14px;font-weight:bold;letter-spacing:0.286px">RefCounted</div>
<div class=t style="left:872px;top:362px;color:#cdcfd2;font-size:14px;font-weight:normal;letter-spacing:0.279px">Script</div>
<svg class=a style="left:1091px;top:364px;" width="15" height="14" viewBox="0 0 15 14"><path d="M4.5 3.5 A5 5 0 1 1 5.5 12.5" stroke="#e0e0e0" stroke-width="2" fill="none"/><path d="M0.5 4.5 L6 2 L5 8 Z" fill="#e0e0e0"/></svg>
<div class=a style="left:1122px;top:364px;width:15px;height:15px;background:#363c52;border-radius:2px;box-shadow:inset 0 0 0 1px #2a2e3a;color:#f4f4f4;font:14px 'Liberation Mono',monospace;line-height:17px;text-align:center;will-change:transform">C</div>
<div class=t style="left:1183px;top:363px;color:#cdcfd2;font-size:14px;font-weight:normal;letter-spacing:0.434px">color-variable.gd</div>
<div class=a style="left:1342px;top:357px;width:26px;height:30px;background:#242830;border-radius:3px"></div>
<svg class=a style="left:1349px;top:368px;" width="12" height="8" viewBox="0 0 12 8"><path d="M1.5 1.5 L6 6 L10.5 1.5" stroke="#e0e0e0" stroke-width="2" fill="none"/></svg>
<div class=a style="left:1026px;top:391px;width:179px;height:31px;background:#2c303a;border-radius:3px"></div>
<svg class=a style="left:1032px;top:398px;" width="16" height="16" viewBox="0 0 16 16"><path d="M8 1 V15 M1 8 H15" stroke="#e0e0e0" stroke-width="2"/></svg>
<div class=t style="left:1080px;top:398px;color:#cdcfd2;font-size:14px;font-weight:normal;letter-spacing:0.460px">Add Metadata</div>
</body></html>
